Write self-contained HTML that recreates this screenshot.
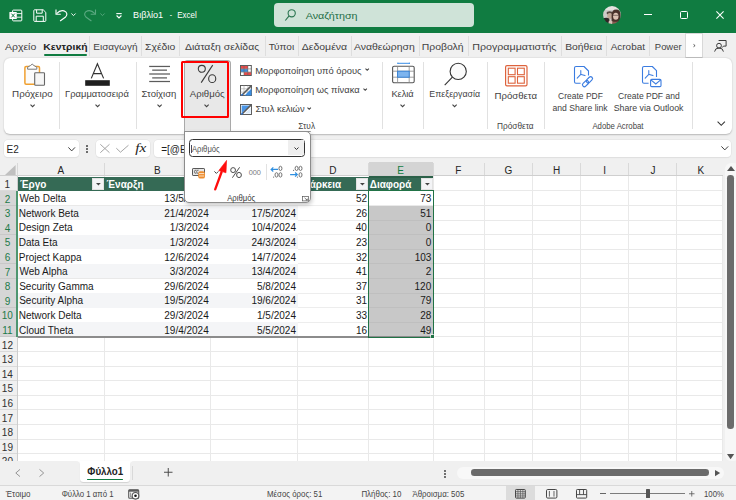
<!DOCTYPE html><html><head><meta charset="utf-8"><style>
html,body{margin:0;padding:0}
body{width:736px;height:500px;overflow:hidden;position:relative;background:#f0f0f0;font-family:"Liberation Sans",sans-serif}
.b{position:absolute;box-sizing:border-box}
svg.b{overflow:visible}
</style></head><body>
<div class="b" style="left:0px;top:0px;width:736.00px;height:32.60px;background:#107c41"></div>
<svg class="b" style="left:9px;top:8.5px" width="13.5" height="13" viewBox="0 0 13.5 13"><rect x="3.6" y="1.1" width="9.2" height="10.8" rx="0.8" fill="none" stroke="#fff" stroke-width="1"/><g stroke="#fff" stroke-width="0.9"><line x1="7.8" y1="4.6" x2="12.8" y2="4.6"/><line x1="7.8" y1="8.2" x2="12.8" y2="8.2"/></g><rect x="0.4" y="3" width="7.4" height="7" rx="0.6" fill="#fff"/><path d="M2.4 4.6l3.4 3.8M5.8 4.6l-3.4 3.8" stroke="#107c41" stroke-width="1"/></svg>
<svg class="b" style="left:33px;top:8.8px" width="13.5" height="12.5" viewBox="0 0 13.5 12.5"><path d="M1.6 0.8h8.6l2.6 2.6v8.2a0.8 0.8 0 0 1-0.8 0.8h-10.4a0.8 0.8 0 0 1-0.8-0.8v-10a0.8 0.8 0 0 1 0.8-0.8z" fill="none" stroke="#fff" stroke-width="1"/><path d="M3.6 0.8v3.4h5.6v-3.4" fill="none" stroke="#fff" stroke-width="1"/><path d="M3.2 12.2v-5h7.1v5" fill="none" stroke="#fff" stroke-width="1"/></svg>
<svg class="b" style="left:54px;top:6px" width="15.5" height="17" viewBox="0 0 15.5 17"><path d="M2 3.4V8.2H6.8" fill="none" stroke="#fff" stroke-width="1.1"/><path d="M2.6 7.6Q7.4 2.6 11.8 5.9Q14 8.3 11.6 11L6.1 15" fill="none" stroke="#fff" stroke-width="1.1"/></svg>
<svg class="b" style="left:71px;top:13.4px" width="5" height="3" viewBox="0 0 5 3"><path d="M0.4 0.5l2.1 2.1 2.1-2.1" fill="none" stroke="#fff" stroke-width="0.95"/></svg>
<svg class="b" style="left:82px;top:6px" width="15.5" height="17" viewBox="0 0 15.5 17"><g transform="translate(15.5,0) scale(-1,1)"><path d="M2 3.4V8.2H6.8" fill="none" stroke="#5aa880" stroke-width="1.1"/><path d="M2.6 7.6Q7.4 2.6 11.8 5.9Q14 8.3 11.6 11L6.1 15" fill="none" stroke="#5aa880" stroke-width="1.1"/></g></svg>
<svg class="b" style="left:99.9px;top:13.3px" width="5" height="3" viewBox="0 0 5 3"><path d="M0.4 0.5l2.1 2.1 2.1-2.1" fill="none" stroke="#5aa880" stroke-width="0.9"/></svg>
<svg class="b" style="left:115.9px;top:12.5px" width="6" height="5.5" viewBox="0 0 6 5.5"><line x1="0.3" y1="0.6" x2="5.7" y2="0.6" stroke="#fff" stroke-width="1.1"/><path d="M0.6 2.5l2.4 2.4 2.4-2.4" fill="none" stroke="#fff" stroke-width="1.1"/></svg>
<svg class="b" style="left:0;top:0" width="1" height="1"><text transform="translate(133.09,18.40) scale(1.0315,1)" font-family="'Liberation Sans'" font-size="8.841" font-weight="normal" font-style="normal" fill="#fff" >Βιβλίο1</text></svg>
<svg class="b" style="left:0;top:0" width="1" height="1"><text transform="translate(169.69,18.40) scale(0.7665,1)" font-family="'Liberation Sans'" font-size="8.841" font-weight="normal" font-style="normal" fill="#fff" >-</text></svg>
<svg class="b" style="left:0;top:0" width="1" height="1"><text transform="translate(177.18,18.40) scale(0.9044,1)" font-family="'Liberation Sans'" font-size="8.841" font-weight="normal" font-style="normal" fill="#fff" >Excel</text></svg>
<div class="b" style="left:274.3px;top:3px;width:199.50px;height:23.90px;background:#cfe3d8;border-radius:4px"></div>
<svg class="b" style="left:284.5px;top:8.8px" width="11" height="12" viewBox="0 0 11 12"><circle cx="6.7" cy="4.3" r="3.6" fill="none" stroke="#2a7550" stroke-width="1.1"/><line x1="4.1" y1="6.9" x2="0.3" y2="11.5" stroke="#2a7550" stroke-width="1.15"/></svg>
<svg class="b" style="left:0;top:0" width="1" height="1"><text transform="translate(305.70,18.90) scale(1.0903,1)" font-family="'Liberation Sans'" font-size="9.855" font-weight="normal" font-style="normal" fill="#226d45" >Αναζήτηση</text></svg>
<svg class="b" style="left:602.5px;top:5.8px" width="18" height="18" viewBox="0 0 18 18"><defs><clipPath id="av"><circle cx="9" cy="9" r="8.95"/></clipPath><filter id="bl"><feGaussianBlur stdDeviation="0.45"/></filter></defs><g clip-path="url(#av)"><g filter="url(#bl)"><rect x="-2" y="-2" width="22" height="22" fill="#cfcbc8"/><rect x="-2" y="-2" width="22" height="6" fill="#e4e2e0"/><ellipse cx="6.6" cy="7" rx="3" ry="1.8" fill="#55473f"/><ellipse cx="6.8" cy="10" rx="2.6" ry="3" fill="#c2a897"/><path d="M-1 13q4-2 7-0.6l2 6h-9z" fill="#2e2828"/><path d="M8.6 9q0-5.6 4.6-5.6t4.4 5.6v10h-9z" fill="#4a332b"/><ellipse cx="12.8" cy="10.2" rx="2.7" ry="3.5" fill="#ddc3b3"/><path d="M10 9.3h5.6" stroke="#4a3c38" stroke-width="0.6"/><path d="M9.6 15.4q3 0.6 5.6 0l1 3h-7z" fill="#8a5a50"/><path d="M6 14.5q2 0 3.6 1l-0.6 3.5h-4z" fill="#d8c4ba"/></g></g></svg>
<div class="b" style="left:643.6px;top:14.2px;width:8.00px;height:1.00px;background:#fff"></div>
<div class="b" style="left:679.7px;top:11.3px;width:8.00px;height:7.70px;border:1.05px solid #fff;border-radius:1.5px"></div>
<svg class="b" style="left:716px;top:11.3px" width="8" height="8" viewBox="0 0 8 8"><path d="M0.4 0.4L7.6 7.6M7.6 0.4L0.4 7.6" stroke="#fff" stroke-width="1.05"/></svg>
<svg class="b" style="left:0;top:0" width="1" height="1"><text transform="translate(5.05,50.00) scale(1.1209,1)" font-family="'Liberation Sans'" font-size="9.348" font-weight="normal" font-style="normal" fill="#424242" >Αρχείο</text></svg>
<svg class="b" style="left:0;top:0" width="1" height="1"><text transform="translate(93.22,50.00) scale(1.0730,1)" font-family="'Liberation Sans'" font-size="9.348" font-weight="normal" font-style="normal" fill="#424242" >Εισαγωγή</text></svg>
<svg class="b" style="left:0;top:0" width="1" height="1"><text transform="translate(145.01,50.00) scale(1.1126,1)" font-family="'Liberation Sans'" font-size="9.348" font-weight="normal" font-style="normal" fill="#424242" >Σχέδιο</text></svg>
<svg class="b" style="left:0;top:0" width="1" height="1"><text transform="translate(185.09,50.00) scale(1.1165,1)" font-family="'Liberation Sans'" font-size="9.348" font-weight="normal" font-style="normal" fill="#424242" >Διάταξη σελίδας</text></svg>
<svg class="b" style="left:0;top:0" width="1" height="1"><text transform="translate(268.84,50.00) scale(1.0740,1)" font-family="'Liberation Sans'" font-size="9.348" font-weight="normal" font-style="normal" fill="#424242" >Τύποι</text></svg>
<svg class="b" style="left:0;top:0" width="1" height="1"><text transform="translate(301.84,50.00) scale(1.1207,1)" font-family="'Liberation Sans'" font-size="9.348" font-weight="normal" font-style="normal" fill="#424242" >Δεδομένα</text></svg>
<svg class="b" style="left:0;top:0" width="1" height="1"><text transform="translate(354.00,50.00) scale(1.1205,1)" font-family="'Liberation Sans'" font-size="9.348" font-weight="normal" font-style="normal" fill="#424242" >Αναθεώρηση</text></svg>
<svg class="b" style="left:0;top:0" width="1" height="1"><text transform="translate(421.68,50.00) scale(1.1163,1)" font-family="'Liberation Sans'" font-size="9.348" font-weight="normal" font-style="normal" fill="#424242" >Προβολή</text></svg>
<svg class="b" style="left:0;top:0" width="1" height="1"><text transform="translate(472.16,50.00) scale(1.1446,1)" font-family="'Liberation Sans'" font-size="9.348" font-weight="normal" font-style="normal" fill="#424242" >Προγραμματιστής</text></svg>
<svg class="b" style="left:0;top:0" width="1" height="1"><text transform="translate(565.19,50.00) scale(1.1042,1)" font-family="'Liberation Sans'" font-size="9.348" font-weight="normal" font-style="normal" fill="#424242" >Βοήθεια</text></svg>
<svg class="b" style="left:0;top:0" width="1" height="1"><text transform="translate(610.75,50.00) scale(1.0621,1)" font-family="'Liberation Sans'" font-size="9.348" font-weight="normal" font-style="normal" fill="#424242" >Acrobat</text></svg>
<svg class="b" style="left:0;top:0" width="1" height="1"><text transform="translate(654.86,50.00) scale(1.0070,1)" font-family="'Liberation Sans'" font-size="9.348" font-weight="normal" font-style="normal" fill="#424242" >Power</text></svg>
<svg class="b" style="left:0;top:0" width="1" height="1"><text transform="translate(43.35,50.00) scale(1.1075,1)" font-family="'Liberation Sans'" font-size="9.348" font-weight="bold" font-style="normal" fill="#222" >Κεντρική</text></svg>
<div class="b" style="left:44px;top:54.2px;width:43.00px;height:1.80px;background:#107c41;border-radius:1px"></div>
<div class="b" style="left:89.2px;top:36px;width:1.00px;height:20.00px;background:#dedede"></div>
<div class="b" style="left:140.75px;top:36px;width:1.00px;height:20.00px;background:#dedede"></div>
<div class="b" style="left:179.0px;top:36px;width:1.00px;height:20.00px;background:#dedede"></div>
<div class="b" style="left:264.75px;top:36px;width:1.00px;height:20.00px;background:#dedede"></div>
<div class="b" style="left:298.0px;top:36px;width:1.00px;height:20.00px;background:#dedede"></div>
<div class="b" style="left:350.5px;top:36px;width:1.00px;height:20.00px;background:#dedede"></div>
<div class="b" style="left:418.75px;top:36px;width:1.00px;height:20.00px;background:#dedede"></div>
<div class="b" style="left:467.5px;top:36px;width:1.00px;height:20.00px;background:#dedede"></div>
<div class="b" style="left:560.9px;top:36px;width:1.00px;height:20.00px;background:#dedede"></div>
<div class="b" style="left:606.0px;top:36px;width:1.00px;height:20.00px;background:#dedede"></div>
<div class="b" style="left:649.3px;top:36px;width:1.00px;height:20.00px;background:#dedede"></div>
<div class="b" style="left:684.6px;top:42px;width:1.00px;height:10.00px;background:#b8b8b8;opacity:0.5"></div>
<div class="b" style="left:685.3px;top:33.1px;width:17.90px;height:25.20px;background:#fff;border:1px solid #d8d8d8;border-bottom-color:#c4c4c4;border-radius:1px"></div>
<svg class="b" style="left:693.1px;top:43.8px" width="3" height="3.2" viewBox="0 0 3 3.2"><path d="M0.5 0.4l1.6 1.2-1.6 1.2" fill="none" stroke="#333" stroke-width="0.8"/></svg>
<svg class="b" style="left:714.3px;top:39.8px" width="12.6" height="12" viewBox="0 0 12.6 12"><path d="M4.6 0.5h7.5v5.6h-2.6l-1.4 1.5" fill="none" stroke="#333" stroke-width="0.95"/><circle cx="5" cy="5.7" r="2.4" fill="#f0f0f0" stroke="#333" stroke-width="0.95"/><path d="M0.6 11.6q0.4-3.6 4.4-3.6t4.4 3.6" fill="none" stroke="#333" stroke-width="0.95"/></svg>
<div class="b" style="left:3.7px;top:58.3px;width:728.10px;height:75.60px;background:#fff;border-radius:6px;box-shadow:0 0.8px 1.6px rgba(0,0,0,0.24)"></div>
<svg class="b" style="left:18px;top:60px" width="32" height="30" viewBox="0 0 32 30"><rect x="6.9" y="6.6" width="14.6" height="17.6" rx="1.2" fill="#fbfbfb" stroke="#f0a030" stroke-width="1.5"/><path d="M9.6 9.2V7.2L12.4 5.6Q14.2 2.6 16 5.6L18.8 7.2V9.2Z" fill="#fff" stroke="#7a7a7a" stroke-width="1" stroke-linejoin="round"/><rect x="16.7" y="12.8" width="9.8" height="12.5" rx="0.8" fill="#f6f6f6" stroke="#666" stroke-width="1.1"/></svg>
<svg class="b" style="left:0;top:0" width="1" height="1"><text transform="translate(12.08,97.10) scale(1.0248,1)" font-family="'Liberation Sans'" font-size="9.565" font-weight="normal" font-style="normal" fill="#424242" >Πρόχειρο</text></svg>
<svg class="b" style="left:29.799999999999997px;top:103.60000000000001px" width="5.2" height="3.2" viewBox="0 0 5.2 3.2"><path d="M0.5 0.6l2.10 2.10 2.10 -2.10" fill="none" stroke="#444" stroke-width="1.1"/></svg>
<div class="b" style="left:58.7px;top:62px;width:1.00px;height:66.80px;background:#e1e1e1"></div>
<svg class="b" style="left:85px;top:63.2px" width="25" height="23" viewBox="0 0 25 23"><path d="M6.3 15.4L12.4 0.8 18.6 15.4M8.4 10.6h8.1" fill="none" stroke="#333" stroke-width="1.15"/><rect x="0.2" y="17.2" width="24.6" height="5.6" fill="#1f1f1f"/></svg>
<svg class="b" style="left:0;top:0" width="1" height="1"><text transform="translate(65.07,97.10) scale(0.9825,1)" font-family="'Liberation Sans'" font-size="9.565" font-weight="normal" font-style="normal" fill="#424242" >Γραμματοσειρά</text></svg>
<svg class="b" style="left:94.5px;top:103.60000000000001px" width="5.2" height="3.2" viewBox="0 0 5.2 3.2"><path d="M0.5 0.6l2.10 2.10 2.10 -2.10" fill="none" stroke="#444" stroke-width="1.1"/></svg>
<div class="b" style="left:136.0px;top:62px;width:1.00px;height:66.80px;background:#e1e1e1"></div>
<svg class="b" style="left:149px;top:65.5px" width="21.5" height="16.5" viewBox="0 0 21.5 16.5"><g stroke="#5c5c5c" stroke-width="1.25"><line x1="0.2" y1="0.45" x2="21" y2="0.45"/><line x1="3.2" y1="4.15" x2="18" y2="4.15"/><line x1="0.2" y1="8" x2="21" y2="8"/><line x1="3.2" y1="11.9" x2="18" y2="11.9"/><line x1="0.2" y1="15.5" x2="21" y2="15.5"/></g></svg>
<svg class="b" style="left:0;top:0" width="1" height="1"><text transform="translate(141.55,97.10)" font-family="'Liberation Sans'" font-size="9.565" font-weight="normal" font-style="normal" fill="#424242" >Στοίχιση</text></svg>
<svg class="b" style="left:156.9px;top:103.60000000000001px" width="5.2" height="3.2" viewBox="0 0 5.2 3.2"><path d="M0.5 0.6l2.10 2.10 2.10 -2.10" fill="none" stroke="#444" stroke-width="1.1"/></svg>
<div class="b" style="left:183.6px;top:59.5px;width:47.40px;height:72.30px;background:#e8e8e8;border:1px solid #a9a9a9;border-bottom:none;border-radius:3.5px 3.5px 0 0"></div>
<svg class="b" style="left:194px;top:62px" width="26" height="24" viewBox="0 0 26 24"><ellipse cx="7.8" cy="6.85" rx="3.5" ry="3.45" fill="none" stroke="#3a3a3a" stroke-width="1.1"/><ellipse cx="18.2" cy="16.65" rx="3.55" ry="3.9" fill="none" stroke="#3a3a3a" stroke-width="1.1"/><line x1="18.7" y1="3.1" x2="7.2" y2="20.6" stroke="#3a3a3a" stroke-width="1.1"/></svg>
<svg class="b" style="left:0;top:0" width="1" height="1"><text transform="translate(189.80,97.10) scale(1.0049,1)" font-family="'Liberation Sans'" font-size="9.565" font-weight="normal" font-style="normal" fill="#424242" >Αριθμός</text></svg>
<svg class="b" style="left:203.8px;top:103.60000000000001px" width="5.2" height="3.2" viewBox="0 0 5.2 3.2"><path d="M0.5 0.6l2.10 2.10 2.10 -2.10" fill="none" stroke="#444" stroke-width="1.1"/></svg>
<div class="b" style="left:181px;top:61px;width:48.10px;height:57.40px;border:2.8px solid #ff0000;border-radius:1.5px"></div>
<svg class="b" style="left:240.2px;top:65.1px" width="11.8" height="11" viewBox="0 0 11.8 11"><rect x="0.5" y="0.5" width="10.8" height="10" fill="#fff" stroke="#555" stroke-width="0.95"/><rect x="1" y="1" width="7" height="2.8" fill="#e84a4a"/><rect x="1" y="4.1" width="7" height="2.8" fill="#3b8de0"/><rect x="4" y="7.2" width="7" height="2.8" fill="#e84a4a"/><g stroke="#666" stroke-width="0.6"><line x1="4" y1="0.5" x2="4" y2="10.5"/><line x1="7.8" y1="0.5" x2="7.8" y2="10.5"/><line x1="0.5" y1="3.9" x2="11.3" y2="3.9"/><line x1="0.5" y1="7.1" x2="11.3" y2="7.1"/></g></svg>
<svg class="b" style="left:0;top:0" width="1" height="1"><text transform="translate(255.27,73.80) scale(1.0080,1)" font-family="'Liberation Sans'" font-size="9.275" font-weight="normal" font-style="normal" fill="#424242" >Μορφοποίηση υπό όρους</text></svg>
<svg class="b" style="left:364.6px;top:68.4px" width="4.4" height="3.2" viewBox="0 0 4.4 3.2"><path d="M0.5 0.6l1.70 1.70 1.70 -1.70" fill="none" stroke="#444" stroke-width="1.1"/></svg>
<svg class="b" style="left:240.2px;top:84.5px" width="12" height="11" viewBox="0 0 12 11"><rect x="0.5" y="0.5" width="11" height="10" fill="#fff" stroke="#555" stroke-width="0.95"/><g stroke="#9a9a9a" stroke-width="0.55"><line x1="4" y1="0.5" x2="4" y2="10.5"/><line x1="7.9" y1="0.5" x2="7.9" y2="10.5"/><line x1="0.5" y1="3.8" x2="11.5" y2="3.8"/><line x1="0.5" y1="7.1" x2="11.5" y2="7.1"/></g><path d="M4.6 10.5L11.5 3.6V10.5Z" fill="#3b8de0"/><path d="M10.9 1.1L2.3 9.7" stroke="#5a5a5a" stroke-width="1.5"/><path d="M2.9 9.1L1.3 10.4" stroke="#2b6cc4" stroke-width="1.4"/></svg>
<svg class="b" style="left:0;top:0" width="1" height="1"><text transform="translate(255.27,93.30) scale(1.0051,1)" font-family="'Liberation Sans'" font-size="9.275" font-weight="normal" font-style="normal" fill="#424242" >Μορφοποίηση ως πίνακα</text></svg>
<svg class="b" style="left:362.7px;top:88.0px" width="4.4" height="3.2" viewBox="0 0 4.4 3.2"><path d="M0.5 0.6l1.70 1.70 1.70 -1.70" fill="none" stroke="#444" stroke-width="1.1"/></svg>
<svg class="b" style="left:240.2px;top:103.6px" width="12" height="11" viewBox="0 0 12 11"><rect x="0.5" y="0.5" width="11" height="10" fill="#fff" stroke="#555" stroke-width="0.95"/><path d="M1.6 1.6H10.4L1.6 9.4Z" fill="#4a95e6"/><path d="M4.8 9.6L10.6 3.8V9.6Z" fill="#dceafa"/><path d="M10.9 1.1L2.3 9.7" stroke="#5a5a5a" stroke-width="1.5"/><path d="M2.9 9.1L1.3 10.4" stroke="#2b6cc4" stroke-width="1.4"/></svg>
<svg class="b" style="left:0;top:0" width="1" height="1"><text transform="translate(255.56,112.30) scale(1.0111,1)" font-family="'Liberation Sans'" font-size="9.275" font-weight="normal" font-style="normal" fill="#424242" >Στυλ κελιών</text></svg>
<svg class="b" style="left:306.5px;top:106.60000000000001px" width="4.4" height="3.2" viewBox="0 0 4.4 3.2"><path d="M0.5 0.6l1.70 1.70 1.70 -1.70" fill="none" stroke="#444" stroke-width="1.1"/></svg>
<svg class="b" style="left:0;top:0" width="1" height="1"><text transform="translate(298.31,129.40) scale(0.9927,1)" font-family="'Liberation Sans'" font-size="8.406" font-weight="normal" font-style="normal" fill="#444444" >Στυλ</text></svg>
<div class="b" style="left:381.7px;top:62px;width:1.00px;height:66.80px;background:#e1e1e1"></div>
<svg class="b" style="left:391.5px;top:62.5px" width="23" height="20.5" viewBox="0 0 23 20.5"><path d="M5.8 0.3h11.6M5.8 -0.4v1.4M17.4 -0.4v1.4" stroke="#3a8ee6" stroke-width="1"/><rect x="0.6" y="3.2" width="21.6" height="16.6" rx="1.6" fill="#fff" stroke="#555" stroke-width="1.1"/><g stroke="#888" stroke-width="0.8"><line x1="5.6" y1="3.2" x2="5.6" y2="19.8"/><line x1="17.2" y1="3.2" x2="17.2" y2="19.8"/><line x1="0.6" y1="8.2" x2="22.2" y2="8.2"/><line x1="0.6" y1="14.2" x2="22.2" y2="14.2"/></g><rect x="5.6" y="8.2" width="11.6" height="6" fill="#7db4ee" stroke="#2f7fd6" stroke-width="0.9"/></svg>
<svg class="b" style="left:0;top:0" width="1" height="1"><text transform="translate(391.38,97.10) scale(0.9691,1)" font-family="'Liberation Sans'" font-size="9.565" font-weight="normal" font-style="normal" fill="#424242" >Κελιά</text></svg>
<svg class="b" style="left:399.79999999999995px;top:103.60000000000001px" width="5.2" height="3.2" viewBox="0 0 5.2 3.2"><path d="M0.5 0.6l2.10 2.10 2.10 -2.10" fill="none" stroke="#444" stroke-width="1.1"/></svg>
<div class="b" style="left:422.7px;top:62px;width:1.00px;height:66.80px;background:#e1e1e1"></div>
<svg class="b" style="left:443.5px;top:62.5px" width="23.5" height="23" viewBox="0 0 23.5 23"><circle cx="14.2" cy="8.4" r="8.1" fill="#fbfbfb" stroke="#333" stroke-width="1.1"/><line x1="8.4" y1="14.2" x2="0.7" y2="22.2" stroke="#333" stroke-width="1.1"/></svg>
<svg class="b" style="left:0;top:0" width="1" height="1"><text transform="translate(429.31,97.10) scale(0.9224,1)" font-family="'Liberation Sans'" font-size="9.565" font-weight="normal" font-style="normal" fill="#424242" >Επεξεργασία</text></svg>
<svg class="b" style="left:452.2px;top:103.60000000000001px" width="5.2" height="3.2" viewBox="0 0 5.2 3.2"><path d="M0.5 0.6l2.10 2.10 2.10 -2.10" fill="none" stroke="#444" stroke-width="1.1"/></svg>
<div class="b" style="left:486.7px;top:62px;width:1.00px;height:66.80px;background:#e1e1e1"></div>
<svg class="b" style="left:504.6px;top:64.6px" width="22.6" height="21.4" viewBox="0 0 22.6 21.4"><rect x="0.6" y="0.6" width="21.4" height="20.2" rx="1.4" fill="none" stroke="#de633c" stroke-width="1.2"/><g fill="none" stroke="#de633c" stroke-width="1.1"><rect x="3.3" y="3.2" width="6.8" height="6.5"/><rect x="12.5" y="3.2" width="6.8" height="6.5"/><rect x="3.3" y="11.7" width="6.8" height="6.5"/><rect x="12.5" y="11.7" width="6.8" height="6.5"/></g></svg>
<svg class="b" style="left:0;top:0" width="1" height="1"><text transform="translate(494.45,99.00) scale(1.0244,1)" font-family="'Liberation Sans'" font-size="9.420" font-weight="normal" font-style="normal" fill="#424242" >Πρόσθετα</text></svg>
<svg class="b" style="left:0;top:0" width="1" height="1"><text transform="translate(497.05,129.40) scale(0.9860,1)" font-family="'Liberation Sans'" font-size="8.406" font-weight="normal" font-style="normal" fill="#444444" >Πρόσθετα</text></svg>
<div class="b" style="left:543.7px;top:62px;width:1.00px;height:66.80px;background:#e1e1e1"></div>
<svg class="b" style="left:570px;top:62px" width="28" height="28" viewBox="0 0 28 28"><path d="M10.6 21.3H6a1.5 1.5 0 0 1-1.5-1.5V6a1.5 1.5 0 0 1 1.5-1.5H14L18.5 9V13.4" fill="none" stroke="#3b7ce0" stroke-width="1.1" stroke-linejoin="round"/><path d="M10.8 8.4V12.4L7.2 16.2M11.2 12.6L15 13.6" fill="none" stroke="#3b7ce0" stroke-width="1.05" stroke-linecap="round" stroke-linejoin="round"/><g transform="rotate(-45 17.5 19.7)" fill="none" stroke="#3b7ce0" stroke-width="1.15"><rect x="11.2" y="17.8" width="7.2" height="3.8" rx="1.9"/><rect x="16.6" y="17.8" width="7.2" height="3.8" rx="1.9"/></g></svg>
<svg class="b" style="left:0;top:0" width="1" height="1"><text transform="translate(558.10,99.05) scale(0.9003,1)" font-family="'Liberation Sans'" font-size="9.420" font-weight="normal" font-style="normal" fill="#424242" >Create PDF</text></svg>
<svg class="b" style="left:0;top:0" width="1" height="1"><text transform="translate(552.53,110.50) scale(0.9155,1)" font-family="'Liberation Sans'" font-size="9.420" font-weight="normal" font-style="normal" fill="#424242" >and Share link</text></svg>
<svg class="b" style="left:638px;top:62px" width="28" height="28" viewBox="0 0 28 28"><path d="M10.6 21.3H6a1.5 1.5 0 0 1-1.5-1.5V6a1.5 1.5 0 0 1 1.5-1.5H14.3L18.5 8.6V15" fill="none" stroke="#3b7ce0" stroke-width="1.1" stroke-linejoin="round"/><path d="M10.8 8.4V12.4L7.2 16.2M11.2 12.6L15 13.6" fill="none" stroke="#3b7ce0" stroke-width="1.05" stroke-linecap="round" stroke-linejoin="round"/><rect x="12.6" y="17.4" width="10.4" height="7.2" rx="1.1" fill="#fff" stroke="#3b7ce0" stroke-width="1.1"/><path d="M12.9 17.8l4.9 4.2 4.9-4.2" fill="none" stroke="#3b7ce0" stroke-width="1.05"/></svg>
<svg class="b" style="left:0;top:0" width="1" height="1"><text transform="translate(618.00,99.05) scale(0.9076,1)" font-family="'Liberation Sans'" font-size="9.420" font-weight="normal" font-style="normal" fill="#424242" >Create PDF and</text></svg>
<svg class="b" style="left:0;top:0" width="1" height="1"><text transform="translate(613.73,110.50) scale(0.9327,1)" font-family="'Liberation Sans'" font-size="9.420" font-weight="normal" font-style="normal" fill="#424242" >Share via Outlook</text></svg>
<svg class="b" style="left:0;top:0" width="1" height="1"><text transform="translate(592.40,129.40) scale(0.9274,1)" font-family="'Liberation Sans'" font-size="8.406" font-weight="normal" font-style="normal" fill="#444444" >Adobe Acrobat</text></svg>
<div class="b" style="left:691.7px;top:62px;width:1.00px;height:66.80px;background:#e1e1e1"></div>
<svg class="b" style="left:716.8px;top:121px" width="8.5" height="5" viewBox="0 0 8.5 5"><path d="M0.6 0.6l3.65 3.65 3.65-3.65" fill="none" stroke="#333" stroke-width="1.05"/></svg>
<div class="b" style="left:3.8px;top:139.8px;width:75.30px;height:17.10px;background:#fff;border-radius:4px;box-shadow:0 0 0 0.6px #e2e2e2, 0 0.6px 1px rgba(0,0,0,0.08)"></div>
<svg class="b" style="left:0;top:0" width="1" height="1"><text transform="translate(6.62,152.50)" font-family="'Liberation Sans'" font-size="10.000" font-weight="normal" font-style="normal" fill="#1f1f1f" >E2</text></svg>
<svg class="b" style="left:67.9px;top:146.9px" width="7.4" height="4.5" viewBox="0 0 7.4 4.5"><path d="M0.4 0.4l3.3 3.5 3.3-3.5" fill="none" stroke="#333" stroke-width="0.95"/></svg>
<svg class="b" style="left:86.3px;top:144.6px" width="2" height="8" viewBox="0 0 2 8"><circle cx="1" cy="1" r="0.95" fill="#333"/><circle cx="1" cy="4" r="0.95" fill="#333"/><circle cx="1" cy="7" r="0.95" fill="#333"/></svg>
<div class="b" style="left:95.5px;top:139.8px;width:54.30px;height:17.10px;background:#fff;border-radius:4px;box-shadow:0 0 0 0.6px #e2e2e2, 0 0.6px 1px rgba(0,0,0,0.08)"></div>
<svg class="b" style="left:99.6px;top:144.2px" width="9.8" height="9" viewBox="0 0 9.8 9"><path d="M0.3 0.3l9.2 8.4M9.5 0.3l-9.2 8.4" stroke="#a0a0a0" stroke-width="0.95"/></svg>
<svg class="b" style="left:116.2px;top:145px" width="12.7" height="7.5" viewBox="0 0 12.7 7.5"><path d="M0.3 3.2l4.2 4 8-7" fill="none" stroke="#a0a0a0" stroke-width="0.95"/></svg>
<svg class="b" style="left:0;top:0" width="1" height="1"><text transform="translate(135.30,152.40) scale(1.2490,1)" font-family="'Liberation Serif'" font-size="12.200" font-weight="normal" font-style="italic" fill="#222" >fx</text></svg>
<div class="b" style="left:153.7px;top:139.8px;width:577.50px;height:17.10px;background:#fff;border-radius:4px;box-shadow:0 0 0 0.6px #e2e2e2, 0 0.6px 1px rgba(0,0,0,0.08)"></div>
<svg class="b" style="left:0;top:0" width="1" height="1"><text transform="translate(161.13,152.50)" font-family="'Liberation Sans'" font-size="10.000" font-weight="normal" font-style="normal" fill="#1f1f1f" >=[@E</text></svg>
<svg class="b" style="left:721px;top:145.6px" width="7.6" height="4.4" viewBox="0 0 7.6 4.4"><path d="M0.4 0.4l3.4 3.5 3.4-3.5" fill="none" stroke="#333" stroke-width="0.95"/></svg>
<div class="b" style="left:0px;top:162.2px;width:736.00px;height:298.80px;background:#fff"></div>
<div class="b" style="left:103.9px;top:176.3px;width:1.00px;height:284.70px;background:#e9e9e9"></div>
<div class="b" style="left:210.0px;top:176.3px;width:1.00px;height:284.70px;background:#e9e9e9"></div>
<div class="b" style="left:297.2px;top:176.3px;width:1.00px;height:284.70px;background:#e9e9e9"></div>
<div class="b" style="left:368.1px;top:176.3px;width:1.00px;height:284.70px;background:#e9e9e9"></div>
<div class="b" style="left:432.5px;top:176.3px;width:1.00px;height:284.70px;background:#e9e9e9"></div>
<div class="b" style="left:483.5px;top:176.3px;width:1.00px;height:284.70px;background:#e9e9e9"></div>
<div class="b" style="left:532.0px;top:176.3px;width:1.00px;height:284.70px;background:#e9e9e9"></div>
<div class="b" style="left:580.0px;top:176.3px;width:1.00px;height:284.70px;background:#e9e9e9"></div>
<div class="b" style="left:628.1px;top:176.3px;width:1.00px;height:284.70px;background:#e9e9e9"></div>
<div class="b" style="left:676.2px;top:176.3px;width:1.00px;height:284.70px;background:#e9e9e9"></div>
<div class="b" style="left:722.0px;top:176.3px;width:1.00px;height:284.70px;background:#e9e9e9"></div>
<div class="b" style="left:17.3px;top:190.4px;width:705.20px;height:1.00px;background:#e9e9e9"></div>
<div class="b" style="left:17.3px;top:205.0px;width:705.20px;height:1.00px;background:#e9e9e9"></div>
<div class="b" style="left:17.3px;top:219.6px;width:705.20px;height:1.00px;background:#e9e9e9"></div>
<div class="b" style="left:17.3px;top:234.20000000000002px;width:705.20px;height:1.00px;background:#e9e9e9"></div>
<div class="b" style="left:17.3px;top:248.8px;width:705.20px;height:1.00px;background:#e9e9e9"></div>
<div class="b" style="left:17.3px;top:263.40000000000003px;width:705.20px;height:1.00px;background:#e9e9e9"></div>
<div class="b" style="left:17.3px;top:278.0px;width:705.20px;height:1.00px;background:#e9e9e9"></div>
<div class="b" style="left:17.3px;top:292.6px;width:705.20px;height:1.00px;background:#e9e9e9"></div>
<div class="b" style="left:17.3px;top:307.20000000000005px;width:705.20px;height:1.00px;background:#e9e9e9"></div>
<div class="b" style="left:17.3px;top:321.80000000000007px;width:705.20px;height:1.00px;background:#e9e9e9"></div>
<div class="b" style="left:17.3px;top:336.40000000000003px;width:705.20px;height:1.00px;background:#e9e9e9"></div>
<div class="b" style="left:17.3px;top:351.0px;width:705.20px;height:1.00px;background:#e9e9e9"></div>
<div class="b" style="left:17.3px;top:365.6px;width:705.20px;height:1.00px;background:#e9e9e9"></div>
<div class="b" style="left:17.3px;top:380.20000000000005px;width:705.20px;height:1.00px;background:#e9e9e9"></div>
<div class="b" style="left:17.3px;top:394.80000000000007px;width:705.20px;height:1.00px;background:#e9e9e9"></div>
<div class="b" style="left:17.3px;top:409.40000000000003px;width:705.20px;height:1.00px;background:#e9e9e9"></div>
<div class="b" style="left:17.3px;top:424.0px;width:705.20px;height:1.00px;background:#e9e9e9"></div>
<div class="b" style="left:17.3px;top:438.6px;width:705.20px;height:1.00px;background:#e9e9e9"></div>
<div class="b" style="left:17.3px;top:453.20000000000005px;width:705.20px;height:1.00px;background:#e9e9e9"></div>
<div class="b" style="left:17.3px;top:467.8px;width:705.20px;height:1.00px;background:#e9e9e9"></div>
<div class="b" style="left:0px;top:162.2px;width:722.50px;height:14.10px;background:#f0f0f0"></div>
<div class="b" style="left:368.6px;top:162.2px;width:64.40px;height:14.10px;background:#d4d4d4"></div>
<div class="b" style="left:103.9px;top:162.7px;width:1.00px;height:13.60px;background:#d9d9d9"></div>
<svg class="b" style="left:0;top:0" width="1" height="1"><text transform="translate(57.49,173.90)" font-family="'Liberation Sans'" font-size="10.000" font-weight="normal" font-style="normal" fill="#262626" >A</text></svg>
<div class="b" style="left:210.0px;top:162.7px;width:1.00px;height:13.60px;background:#d9d9d9"></div>
<svg class="b" style="left:0;top:0" width="1" height="1"><text transform="translate(153.93,173.90)" font-family="'Liberation Sans'" font-size="10.000" font-weight="normal" font-style="normal" fill="#262626" >B</text></svg>
<div class="b" style="left:297.2px;top:162.7px;width:1.00px;height:13.60px;background:#d9d9d9"></div>
<svg class="b" style="left:0;top:0" width="1" height="1"><text transform="translate(250.43,173.90)" font-family="'Liberation Sans'" font-size="10.000" font-weight="normal" font-style="normal" fill="#262626" >C</text></svg>
<div class="b" style="left:368.1px;top:162.7px;width:1.00px;height:13.60px;background:#d9d9d9"></div>
<svg class="b" style="left:0;top:0" width="1" height="1"><text transform="translate(329.32,173.90)" font-family="'Liberation Sans'" font-size="10.000" font-weight="normal" font-style="normal" fill="#262626" >D</text></svg>
<div class="b" style="left:432.5px;top:162.7px;width:1.00px;height:13.60px;background:#d9d9d9"></div>
<svg class="b" style="left:0;top:0" width="1" height="1"><text transform="translate(397.28,173.90)" font-family="'Liberation Sans'" font-size="10.000" font-weight="normal" font-style="normal" fill="#107c41" >E</text></svg>
<div class="b" style="left:483.5px;top:162.7px;width:1.00px;height:13.60px;background:#d9d9d9"></div>
<svg class="b" style="left:0;top:0" width="1" height="1"><text transform="translate(455.22,173.90)" font-family="'Liberation Sans'" font-size="10.000" font-weight="normal" font-style="normal" fill="#262626" >F</text></svg>
<div class="b" style="left:532.0px;top:162.7px;width:1.00px;height:13.60px;background:#d9d9d9"></div>
<svg class="b" style="left:0;top:0" width="1" height="1"><text transform="translate(504.50,173.90)" font-family="'Liberation Sans'" font-size="10.000" font-weight="normal" font-style="normal" fill="#262626" >G</text></svg>
<div class="b" style="left:580.0px;top:162.7px;width:1.00px;height:13.60px;background:#d9d9d9"></div>
<svg class="b" style="left:0;top:0" width="1" height="1"><text transform="translate(552.91,173.90)" font-family="'Liberation Sans'" font-size="10.000" font-weight="normal" font-style="normal" fill="#262626" >H</text></svg>
<div class="b" style="left:628.1px;top:162.7px;width:1.00px;height:13.60px;background:#d9d9d9"></div>
<svg class="b" style="left:0;top:0" width="1" height="1"><text transform="translate(603.22,173.90)" font-family="'Liberation Sans'" font-size="10.000" font-weight="normal" font-style="normal" fill="#262626" >I</text></svg>
<div class="b" style="left:676.2px;top:162.7px;width:1.00px;height:13.60px;background:#d9d9d9"></div>
<svg class="b" style="left:0;top:0" width="1" height="1"><text transform="translate(650.38,173.90)" font-family="'Liberation Sans'" font-size="10.000" font-weight="normal" font-style="normal" fill="#262626" >J</text></svg>
<svg class="b" style="left:0;top:0" width="1" height="1"><text transform="translate(697.53,173.90)" font-family="'Liberation Sans'" font-size="10.000" font-weight="normal" font-style="normal" fill="#262626" >K</text></svg>
<div class="b" style="left:0px;top:175.4px;width:722.50px;height:1.00px;background:#cfcfcf"></div>
<svg class="b" style="left:5.4px;top:164.8px" width="10.6" height="10" viewBox="0 0 10.6 10"><path d="M10.6 0V10H0z" fill="#c0c0c0"/></svg>
<div class="b" style="left:16.8px;top:162.7px;width:1.00px;height:13.60px;background:#d9d9d9"></div>
<div class="b" style="left:0px;top:176.3px;width:17.30px;height:284.70px;background:#f0f0f0"></div>
<div class="b" style="left:0px;top:190.4px;width:17.30px;height:1.00px;background:#dadada"></div>
<svg class="b" style="left:0;top:0" width="1" height="1"><text transform="translate(4.62,188.00)" font-family="'Liberation Sans'" font-size="10.000" font-weight="normal" font-style="normal" fill="#303030" >1</text></svg>
<div class="b" style="left:0px;top:190.9px;width:17.30px;height:14.60px;background:#d6d6d6"></div>
<div class="b" style="left:0px;top:205.0px;width:17.30px;height:1.00px;background:#c8c8c8"></div>
<svg class="b" style="left:0;top:0" width="1" height="1"><text transform="translate(4.70,202.60)" font-family="'Liberation Sans'" font-size="10.000" font-weight="normal" font-style="normal" fill="#1d7a4a" >2</text></svg>
<div class="b" style="left:0px;top:205.5px;width:17.30px;height:14.60px;background:#d6d6d6"></div>
<div class="b" style="left:0px;top:219.6px;width:17.30px;height:1.00px;background:#c8c8c8"></div>
<svg class="b" style="left:0;top:0" width="1" height="1"><text transform="translate(4.78,217.20)" font-family="'Liberation Sans'" font-size="10.000" font-weight="normal" font-style="normal" fill="#1d7a4a" >3</text></svg>
<div class="b" style="left:0px;top:220.10000000000002px;width:17.30px;height:14.60px;background:#d6d6d6"></div>
<div class="b" style="left:0px;top:234.20000000000002px;width:17.30px;height:1.00px;background:#c8c8c8"></div>
<svg class="b" style="left:0;top:0" width="1" height="1"><text transform="translate(4.78,231.80)" font-family="'Liberation Sans'" font-size="10.000" font-weight="normal" font-style="normal" fill="#1d7a4a" >4</text></svg>
<div class="b" style="left:0px;top:234.70000000000002px;width:17.30px;height:14.60px;background:#d6d6d6"></div>
<div class="b" style="left:0px;top:248.8px;width:17.30px;height:1.00px;background:#c8c8c8"></div>
<svg class="b" style="left:0;top:0" width="1" height="1"><text transform="translate(4.78,246.40)" font-family="'Liberation Sans'" font-size="10.000" font-weight="normal" font-style="normal" fill="#1d7a4a" >5</text></svg>
<div class="b" style="left:0px;top:249.3px;width:17.30px;height:14.60px;background:#d6d6d6"></div>
<div class="b" style="left:0px;top:263.40000000000003px;width:17.30px;height:1.00px;background:#c8c8c8"></div>
<svg class="b" style="left:0;top:0" width="1" height="1"><text transform="translate(4.70,261.00)" font-family="'Liberation Sans'" font-size="10.000" font-weight="normal" font-style="normal" fill="#1d7a4a" >6</text></svg>
<div class="b" style="left:0px;top:263.9px;width:17.30px;height:14.60px;background:#d6d6d6"></div>
<div class="b" style="left:0px;top:278.0px;width:17.30px;height:1.00px;background:#c8c8c8"></div>
<svg class="b" style="left:0;top:0" width="1" height="1"><text transform="translate(4.70,275.60)" font-family="'Liberation Sans'" font-size="10.000" font-weight="normal" font-style="normal" fill="#1d7a4a" >7</text></svg>
<div class="b" style="left:0px;top:278.5px;width:17.30px;height:14.60px;background:#d6d6d6"></div>
<div class="b" style="left:0px;top:292.6px;width:17.30px;height:1.00px;background:#c8c8c8"></div>
<svg class="b" style="left:0;top:0" width="1" height="1"><text transform="translate(4.78,290.20)" font-family="'Liberation Sans'" font-size="10.000" font-weight="normal" font-style="normal" fill="#1d7a4a" >8</text></svg>
<div class="b" style="left:0px;top:293.1px;width:17.30px;height:14.60px;background:#d6d6d6"></div>
<div class="b" style="left:0px;top:307.20000000000005px;width:17.30px;height:1.00px;background:#c8c8c8"></div>
<svg class="b" style="left:0;top:0" width="1" height="1"><text transform="translate(4.70,304.80)" font-family="'Liberation Sans'" font-size="10.000" font-weight="normal" font-style="normal" fill="#1d7a4a" >9</text></svg>
<div class="b" style="left:0px;top:307.70000000000005px;width:17.30px;height:14.60px;background:#d6d6d6"></div>
<div class="b" style="left:0px;top:321.80000000000007px;width:17.30px;height:1.00px;background:#c8c8c8"></div>
<svg class="b" style="left:0;top:0" width="1" height="1"><text transform="translate(1.78,319.40)" font-family="'Liberation Sans'" font-size="10.000" font-weight="normal" font-style="normal" fill="#1d7a4a" >10</text></svg>
<div class="b" style="left:0px;top:322.3px;width:17.30px;height:14.60px;background:#d6d6d6"></div>
<div class="b" style="left:0px;top:336.40000000000003px;width:17.30px;height:1.00px;background:#c8c8c8"></div>
<svg class="b" style="left:0;top:0" width="1" height="1"><text transform="translate(2.22,334.00)" font-family="'Liberation Sans'" font-size="10.000" font-weight="normal" font-style="normal" fill="#1d7a4a" >11</text></svg>
<div class="b" style="left:0px;top:351.0px;width:17.30px;height:1.00px;background:#dadada"></div>
<svg class="b" style="left:0;top:0" width="1" height="1"><text transform="translate(1.85,348.60)" font-family="'Liberation Sans'" font-size="10.000" font-weight="normal" font-style="normal" fill="#303030" >12</text></svg>
<div class="b" style="left:0px;top:365.6px;width:17.30px;height:1.00px;background:#dadada"></div>
<svg class="b" style="left:0;top:0" width="1" height="1"><text transform="translate(1.85,363.20)" font-family="'Liberation Sans'" font-size="10.000" font-weight="normal" font-style="normal" fill="#303030" >13</text></svg>
<div class="b" style="left:0px;top:380.20000000000005px;width:17.30px;height:1.00px;background:#dadada"></div>
<svg class="b" style="left:0;top:0" width="1" height="1"><text transform="translate(1.78,377.80)" font-family="'Liberation Sans'" font-size="10.000" font-weight="normal" font-style="normal" fill="#303030" >14</text></svg>
<div class="b" style="left:0px;top:394.80000000000007px;width:17.30px;height:1.00px;background:#dadada"></div>
<svg class="b" style="left:0;top:0" width="1" height="1"><text transform="translate(1.85,392.40)" font-family="'Liberation Sans'" font-size="10.000" font-weight="normal" font-style="normal" fill="#303030" >15</text></svg>
<div class="b" style="left:0px;top:409.40000000000003px;width:17.30px;height:1.00px;background:#dadada"></div>
<svg class="b" style="left:0;top:0" width="1" height="1"><text transform="translate(1.85,407.00)" font-family="'Liberation Sans'" font-size="10.000" font-weight="normal" font-style="normal" fill="#303030" >16</text></svg>
<div class="b" style="left:0px;top:424.0px;width:17.30px;height:1.00px;background:#dadada"></div>
<svg class="b" style="left:0;top:0" width="1" height="1"><text transform="translate(1.85,421.60)" font-family="'Liberation Sans'" font-size="10.000" font-weight="normal" font-style="normal" fill="#303030" >17</text></svg>
<div class="b" style="left:0px;top:438.6px;width:17.30px;height:1.00px;background:#dadada"></div>
<svg class="b" style="left:0;top:0" width="1" height="1"><text transform="translate(1.85,436.20)" font-family="'Liberation Sans'" font-size="10.000" font-weight="normal" font-style="normal" fill="#303030" >18</text></svg>
<div class="b" style="left:0px;top:453.20000000000005px;width:17.30px;height:1.00px;background:#dadada"></div>
<svg class="b" style="left:0;top:0" width="1" height="1"><text transform="translate(1.85,450.80)" font-family="'Liberation Sans'" font-size="10.000" font-weight="normal" font-style="normal" fill="#303030" >19</text></svg>
<div class="b" style="left:0px;top:467.8px;width:17.30px;height:1.00px;background:#dadada"></div>
<svg class="b" style="left:0;top:0" width="1" height="1"><text transform="translate(1.85,465.40)" font-family="'Liberation Sans'" font-size="10.000" font-weight="normal" font-style="normal" fill="#303030" >20</text></svg>
<div class="b" style="left:16.5px;top:176.3px;width:1.00px;height:284.70px;background:#cdcdcd"></div>
<div class="b" style="left:16.2px;top:190.9px;width:1.70px;height:146.00px;background:#4e9670"></div>
<div class="b" style="left:17.5px;top:177.0px;width:415.50px;height:13.90px;background:#356a55"></div>
<div class="b" style="left:368.6px;top:175.5px;width:64.40px;height:2.00px;background:#2b6048"></div>
<svg class="b" style="left:0;top:0" width="1" height="1"><text transform="translate(20.04,188.10)" font-family="'Liberation Sans'" font-size="10.000" font-weight="bold" font-style="normal" fill="#fff" >Έργο</text></svg>
<div class="b" style="left:92.1px;top:178.3px;width:11.90px;height:12.00px;background:#f3f4f6;border:0.6px solid #e2e2e2"></div>
<svg class="b" style="left:95.9px;top:182.70000000000002px" width="4.8" height="2.6" viewBox="0 0 4.8 2.6"><path d="M0 0h4.8L2.4 2.6z" fill="#444"/></svg>
<svg class="b" style="left:0;top:0" width="1" height="1"><text transform="translate(106.54,188.10)" font-family="'Liberation Sans'" font-size="10.000" font-weight="bold" font-style="normal" fill="#fff" >Έναρξη</text></svg>
<div class="b" style="left:198.2px;top:178.3px;width:11.90px;height:12.00px;background:#f3f4f6;border:0.6px solid #e2e2e2"></div>
<svg class="b" style="left:202.0px;top:182.70000000000002px" width="4.8" height="2.6" viewBox="0 0 4.8 2.6"><path d="M0 0h4.8L2.4 2.6z" fill="#444"/></svg>
<svg class="b" style="left:0;top:0" width="1" height="1"><text transform="translate(212.80,188.10)" font-family="'Liberation Sans'" font-size="10.000" font-weight="bold" font-style="normal" fill="#fff" >Λήξη</text></svg>
<div class="b" style="left:285.40000000000003px;top:178.3px;width:11.90px;height:12.00px;background:#f3f4f6;border:0.6px solid #e2e2e2"></div>
<svg class="b" style="left:289.2px;top:182.70000000000002px" width="4.8" height="2.6" viewBox="0 0 4.8 2.6"><path d="M0 0h4.8L2.4 2.6z" fill="#444"/></svg>
<svg class="b" style="left:0;top:0" width="1" height="1"><text transform="translate(299.69,188.10)" font-family="'Liberation Sans'" font-size="10.000" font-weight="bold" font-style="normal" fill="#fff" >Διάρκεια</text></svg>
<div class="b" style="left:356.30000000000007px;top:178.3px;width:11.90px;height:12.00px;background:#f3f4f6;border:0.6px solid #e2e2e2"></div>
<svg class="b" style="left:360.1px;top:182.70000000000002px" width="4.8" height="2.6" viewBox="0 0 4.8 2.6"><path d="M0 0h4.8L2.4 2.6z" fill="#444"/></svg>
<svg class="b" style="left:0;top:0" width="1" height="1"><text transform="translate(369.69,188.10)" font-family="'Liberation Sans'" font-size="10.000" font-weight="bold" font-style="normal" fill="#fff" >Διαφορά</text></svg>
<div class="b" style="left:420.70000000000005px;top:178.3px;width:11.90px;height:12.00px;background:#f3f4f6;border:0.6px solid #e2e2e2"></div>
<svg class="b" style="left:424.5px;top:182.70000000000002px" width="4.8" height="2.6" viewBox="0 0 4.8 2.6"><path d="M0 0h4.8L2.4 2.6z" fill="#444"/></svg>
<div class="b" style="left:17.5px;top:190.9px;width:415.50px;height:14.60px;background:#ffffff"></div>
<div class="b" style="left:17.5px;top:205.5px;width:415.50px;height:14.60px;background:#f4f5f7"></div>
<div class="b" style="left:17.5px;top:220.10000000000002px;width:415.50px;height:14.60px;background:#ffffff"></div>
<div class="b" style="left:17.5px;top:234.70000000000002px;width:415.50px;height:14.60px;background:#f4f5f7"></div>
<div class="b" style="left:17.5px;top:249.3px;width:415.50px;height:14.60px;background:#ffffff"></div>
<div class="b" style="left:17.5px;top:263.9px;width:415.50px;height:14.60px;background:#f4f5f7"></div>
<div class="b" style="left:17.5px;top:278.5px;width:415.50px;height:14.60px;background:#ffffff"></div>
<div class="b" style="left:17.5px;top:293.1px;width:415.50px;height:14.60px;background:#f4f5f7"></div>
<div class="b" style="left:17.5px;top:307.70000000000005px;width:415.50px;height:14.60px;background:#ffffff"></div>
<div class="b" style="left:17.5px;top:322.3px;width:415.50px;height:14.60px;background:#f4f5f7"></div>
<div class="b" style="left:297.7px;top:190.9px;width:70.90px;height:146.00px;background:#fff"></div>
<div class="b" style="left:297.7px;top:205.0px;width:70.90px;height:1.00px;background:#ededed"></div>
<div class="b" style="left:297.7px;top:219.6px;width:70.90px;height:1.00px;background:#ededed"></div>
<div class="b" style="left:297.7px;top:234.20000000000002px;width:70.90px;height:1.00px;background:#ededed"></div>
<div class="b" style="left:297.7px;top:248.8px;width:70.90px;height:1.00px;background:#ededed"></div>
<div class="b" style="left:297.7px;top:263.40000000000003px;width:70.90px;height:1.00px;background:#ededed"></div>
<div class="b" style="left:297.7px;top:278.0px;width:70.90px;height:1.00px;background:#ededed"></div>
<div class="b" style="left:297.7px;top:292.6px;width:70.90px;height:1.00px;background:#ededed"></div>
<div class="b" style="left:297.7px;top:307.20000000000005px;width:70.90px;height:1.00px;background:#ededed"></div>
<div class="b" style="left:297.7px;top:321.80000000000007px;width:70.90px;height:1.00px;background:#ededed"></div>
<div class="b" style="left:368.6px;top:205.5px;width:64.40px;height:131.40px;background:#c8c8c8"></div>
<div class="b" style="left:368.6px;top:219.6px;width:64.40px;height:1.00px;background:#bfbfbf"></div>
<div class="b" style="left:368.6px;top:234.20000000000002px;width:64.40px;height:1.00px;background:#bfbfbf"></div>
<div class="b" style="left:368.6px;top:248.8px;width:64.40px;height:1.00px;background:#bfbfbf"></div>
<div class="b" style="left:368.6px;top:263.40000000000003px;width:64.40px;height:1.00px;background:#bfbfbf"></div>
<div class="b" style="left:368.6px;top:278.0px;width:64.40px;height:1.00px;background:#bfbfbf"></div>
<div class="b" style="left:368.6px;top:292.6px;width:64.40px;height:1.00px;background:#bfbfbf"></div>
<div class="b" style="left:368.6px;top:307.20000000000005px;width:64.40px;height:1.00px;background:#bfbfbf"></div>
<div class="b" style="left:368.6px;top:321.80000000000007px;width:64.40px;height:1.00px;background:#bfbfbf"></div>
<svg class="b" style="left:0;top:0" width="1" height="1"><text transform="translate(19.50,202.20)" font-family="'Liberation Sans'" font-size="10.000" font-weight="normal" font-style="normal" fill="#1a1a1a" >Web Delta</text></svg>
<svg class="b" style="left:0;top:0" width="1" height="1"><text transform="translate(164.26,202.20)" font-family="'Liberation Sans'" font-size="10.000" font-weight="normal" font-style="normal" fill="#1a1a1a" >13/5/2024</text></svg>
<svg class="b" style="left:0;top:0" width="1" height="1"><text transform="translate(355.88,202.20)" font-family="'Liberation Sans'" font-size="10.000" font-weight="normal" font-style="normal" fill="#1a1a1a" >52</text></svg>
<svg class="b" style="left:0;top:0" width="1" height="1"><text transform="translate(420.28,202.20)" font-family="'Liberation Sans'" font-size="10.000" font-weight="normal" font-style="normal" fill="#1a1a1a" >73</text></svg>
<svg class="b" style="left:0;top:0" width="1" height="1"><text transform="translate(18.72,216.80)" font-family="'Liberation Sans'" font-size="10.000" font-weight="normal" font-style="normal" fill="#1a1a1a" >Network Beta</text></svg>
<svg class="b" style="left:0;top:0" width="1" height="1"><text transform="translate(164.26,216.80)" font-family="'Liberation Sans'" font-size="10.000" font-weight="normal" font-style="normal" fill="#1a1a1a" >21/4/2024</text></svg>
<svg class="b" style="left:0;top:0" width="1" height="1"><text transform="translate(251.46,216.80)" font-family="'Liberation Sans'" font-size="10.000" font-weight="normal" font-style="normal" fill="#1a1a1a" >17/5/2024</text></svg>
<svg class="b" style="left:0;top:0" width="1" height="1"><text transform="translate(355.88,216.80)" font-family="'Liberation Sans'" font-size="10.000" font-weight="normal" font-style="normal" fill="#1a1a1a" >26</text></svg>
<svg class="b" style="left:0;top:0" width="1" height="1"><text transform="translate(420.28,216.80)" font-family="'Liberation Sans'" font-size="10.000" font-weight="normal" font-style="normal" fill="#1a1a1a" >51</text></svg>
<svg class="b" style="left:0;top:0" width="1" height="1"><text transform="translate(18.72,231.40)" font-family="'Liberation Sans'" font-size="10.000" font-weight="normal" font-style="normal" fill="#1a1a1a" >Design Zeta</text></svg>
<svg class="b" style="left:0;top:0" width="1" height="1"><text transform="translate(169.82,231.40)" font-family="'Liberation Sans'" font-size="10.000" font-weight="normal" font-style="normal" fill="#1a1a1a" >1/3/2024</text></svg>
<svg class="b" style="left:0;top:0" width="1" height="1"><text transform="translate(251.46,231.40)" font-family="'Liberation Sans'" font-size="10.000" font-weight="normal" font-style="normal" fill="#1a1a1a" >10/4/2024</text></svg>
<svg class="b" style="left:0;top:0" width="1" height="1"><text transform="translate(355.73,231.40)" font-family="'Liberation Sans'" font-size="10.000" font-weight="normal" font-style="normal" fill="#1a1a1a" >40</text></svg>
<svg class="b" style="left:0;top:0" width="1" height="1"><text transform="translate(425.69,231.40)" font-family="'Liberation Sans'" font-size="10.000" font-weight="normal" font-style="normal" fill="#1a1a1a" >0</text></svg>
<svg class="b" style="left:0;top:0" width="1" height="1"><text transform="translate(18.72,246.00)" font-family="'Liberation Sans'" font-size="10.000" font-weight="normal" font-style="normal" fill="#1a1a1a" >Data Eta</text></svg>
<svg class="b" style="left:0;top:0" width="1" height="1"><text transform="translate(169.82,246.00)" font-family="'Liberation Sans'" font-size="10.000" font-weight="normal" font-style="normal" fill="#1a1a1a" >1/3/2024</text></svg>
<svg class="b" style="left:0;top:0" width="1" height="1"><text transform="translate(251.46,246.00)" font-family="'Liberation Sans'" font-size="10.000" font-weight="normal" font-style="normal" fill="#1a1a1a" >24/3/2024</text></svg>
<svg class="b" style="left:0;top:0" width="1" height="1"><text transform="translate(355.88,246.00)" font-family="'Liberation Sans'" font-size="10.000" font-weight="normal" font-style="normal" fill="#1a1a1a" >23</text></svg>
<svg class="b" style="left:0;top:0" width="1" height="1"><text transform="translate(425.69,246.00)" font-family="'Liberation Sans'" font-size="10.000" font-weight="normal" font-style="normal" fill="#1a1a1a" >0</text></svg>
<svg class="b" style="left:0;top:0" width="1" height="1"><text transform="translate(18.72,260.60)" font-family="'Liberation Sans'" font-size="10.000" font-weight="normal" font-style="normal" fill="#1a1a1a" >Project Kappa</text></svg>
<svg class="b" style="left:0;top:0" width="1" height="1"><text transform="translate(164.26,260.60)" font-family="'Liberation Sans'" font-size="10.000" font-weight="normal" font-style="normal" fill="#1a1a1a" >12/6/2024</text></svg>
<svg class="b" style="left:0;top:0" width="1" height="1"><text transform="translate(251.46,260.60)" font-family="'Liberation Sans'" font-size="10.000" font-weight="normal" font-style="normal" fill="#1a1a1a" >14/7/2024</text></svg>
<svg class="b" style="left:0;top:0" width="1" height="1"><text transform="translate(355.88,260.60)" font-family="'Liberation Sans'" font-size="10.000" font-weight="normal" font-style="normal" fill="#1a1a1a" >32</text></svg>
<svg class="b" style="left:0;top:0" width="1" height="1"><text transform="translate(414.72,260.60)" font-family="'Liberation Sans'" font-size="10.000" font-weight="normal" font-style="normal" fill="#1a1a1a" >103</text></svg>
<svg class="b" style="left:0;top:0" width="1" height="1"><text transform="translate(19.50,275.20)" font-family="'Liberation Sans'" font-size="10.000" font-weight="normal" font-style="normal" fill="#1a1a1a" >Web Alpha</text></svg>
<svg class="b" style="left:0;top:0" width="1" height="1"><text transform="translate(169.82,275.20)" font-family="'Liberation Sans'" font-size="10.000" font-weight="normal" font-style="normal" fill="#1a1a1a" >3/3/2024</text></svg>
<svg class="b" style="left:0;top:0" width="1" height="1"><text transform="translate(251.46,275.20)" font-family="'Liberation Sans'" font-size="10.000" font-weight="normal" font-style="normal" fill="#1a1a1a" >13/4/2024</text></svg>
<svg class="b" style="left:0;top:0" width="1" height="1"><text transform="translate(355.88,275.20)" font-family="'Liberation Sans'" font-size="10.000" font-weight="normal" font-style="normal" fill="#1a1a1a" >41</text></svg>
<svg class="b" style="left:0;top:0" width="1" height="1"><text transform="translate(425.84,275.20)" font-family="'Liberation Sans'" font-size="10.000" font-weight="normal" font-style="normal" fill="#1a1a1a" >2</text></svg>
<svg class="b" style="left:0;top:0" width="1" height="1"><text transform="translate(19.19,289.80)" font-family="'Liberation Sans'" font-size="10.000" font-weight="normal" font-style="normal" fill="#1a1a1a" >Security Gamma</text></svg>
<svg class="b" style="left:0;top:0" width="1" height="1"><text transform="translate(164.26,289.80)" font-family="'Liberation Sans'" font-size="10.000" font-weight="normal" font-style="normal" fill="#1a1a1a" >29/6/2024</text></svg>
<svg class="b" style="left:0;top:0" width="1" height="1"><text transform="translate(257.02,289.80)" font-family="'Liberation Sans'" font-size="10.000" font-weight="normal" font-style="normal" fill="#1a1a1a" >5/8/2024</text></svg>
<svg class="b" style="left:0;top:0" width="1" height="1"><text transform="translate(355.88,289.80)" font-family="'Liberation Sans'" font-size="10.000" font-weight="normal" font-style="normal" fill="#1a1a1a" >37</text></svg>
<svg class="b" style="left:0;top:0" width="1" height="1"><text transform="translate(414.56,289.80)" font-family="'Liberation Sans'" font-size="10.000" font-weight="normal" font-style="normal" fill="#1a1a1a" >120</text></svg>
<svg class="b" style="left:0;top:0" width="1" height="1"><text transform="translate(19.19,304.40)" font-family="'Liberation Sans'" font-size="10.000" font-weight="normal" font-style="normal" fill="#1a1a1a" >Security Alpha</text></svg>
<svg class="b" style="left:0;top:0" width="1" height="1"><text transform="translate(164.26,304.40)" font-family="'Liberation Sans'" font-size="10.000" font-weight="normal" font-style="normal" fill="#1a1a1a" >19/5/2024</text></svg>
<svg class="b" style="left:0;top:0" width="1" height="1"><text transform="translate(251.46,304.40)" font-family="'Liberation Sans'" font-size="10.000" font-weight="normal" font-style="normal" fill="#1a1a1a" >19/6/2024</text></svg>
<svg class="b" style="left:0;top:0" width="1" height="1"><text transform="translate(355.88,304.40)" font-family="'Liberation Sans'" font-size="10.000" font-weight="normal" font-style="normal" fill="#1a1a1a" >31</text></svg>
<svg class="b" style="left:0;top:0" width="1" height="1"><text transform="translate(420.28,304.40)" font-family="'Liberation Sans'" font-size="10.000" font-weight="normal" font-style="normal" fill="#1a1a1a" >79</text></svg>
<svg class="b" style="left:0;top:0" width="1" height="1"><text transform="translate(18.72,319.00)" font-family="'Liberation Sans'" font-size="10.000" font-weight="normal" font-style="normal" fill="#1a1a1a" >Network Delta</text></svg>
<svg class="b" style="left:0;top:0" width="1" height="1"><text transform="translate(164.26,319.00)" font-family="'Liberation Sans'" font-size="10.000" font-weight="normal" font-style="normal" fill="#1a1a1a" >29/3/2024</text></svg>
<svg class="b" style="left:0;top:0" width="1" height="1"><text transform="translate(257.02,319.00)" font-family="'Liberation Sans'" font-size="10.000" font-weight="normal" font-style="normal" fill="#1a1a1a" >1/5/2024</text></svg>
<svg class="b" style="left:0;top:0" width="1" height="1"><text transform="translate(355.88,319.00)" font-family="'Liberation Sans'" font-size="10.000" font-weight="normal" font-style="normal" fill="#1a1a1a" >33</text></svg>
<svg class="b" style="left:0;top:0" width="1" height="1"><text transform="translate(420.28,319.00)" font-family="'Liberation Sans'" font-size="10.000" font-weight="normal" font-style="normal" fill="#1a1a1a" >28</text></svg>
<svg class="b" style="left:0;top:0" width="1" height="1"><text transform="translate(19.03,333.60)" font-family="'Liberation Sans'" font-size="10.000" font-weight="normal" font-style="normal" fill="#1a1a1a" >Cloud Theta</text></svg>
<svg class="b" style="left:0;top:0" width="1" height="1"><text transform="translate(164.26,333.60)" font-family="'Liberation Sans'" font-size="10.000" font-weight="normal" font-style="normal" fill="#1a1a1a" >19/4/2024</text></svg>
<svg class="b" style="left:0;top:0" width="1" height="1"><text transform="translate(257.02,333.60)" font-family="'Liberation Sans'" font-size="10.000" font-weight="normal" font-style="normal" fill="#1a1a1a" >5/5/2024</text></svg>
<svg class="b" style="left:0;top:0" width="1" height="1"><text transform="translate(355.88,333.60)" font-family="'Liberation Sans'" font-size="10.000" font-weight="normal" font-style="normal" fill="#1a1a1a" >16</text></svg>
<svg class="b" style="left:0;top:0" width="1" height="1"><text transform="translate(420.28,333.60)" font-family="'Liberation Sans'" font-size="10.000" font-weight="normal" font-style="normal" fill="#1a1a1a" >49</text></svg>
<div class="b" style="left:17.5px;top:336.0px;width:415.50px;height:1.60px;background:#8c8c8c"></div>
<div class="b" style="left:368.0px;top:190.3px;width:65.90px;height:147.30px;border:1.6px solid #217346"></div>
<div class="b" style="left:431.4px;top:335.29999999999995px;width:3.00px;height:3.00px;background:#217346;box-shadow:0 0 0 0.6px #fff"></div>
<div class="b" style="left:722.5px;top:162.2px;width:13.50px;height:298.80px;background:#f0f0f0"></div>
<div class="b" style="left:724.6px;top:162.7px;width:15.40px;height:298.50px;background:#f7f7f7;border-radius:6.3px"></div>
<svg class="b" style="left:726.6px;top:165.9px" width="8" height="5" viewBox="0 0 8 5"><path d="M0 5L4 0l4 5z" fill="#555"/></svg>
<div class="b" style="left:727.1px;top:175.1px;width:6.70px;height:253.70px;background:#6b6b6b;border-radius:3.3px"></div>
<svg class="b" style="left:727px;top:453.6px" width="7.2" height="5.2" viewBox="0 0 7.2 5.2"><path d="M0 0h7.2L3.6 5.2z" fill="#555"/></svg>
<div class="b" style="left:74px;top:461px;width:62.00px;height:6.00px;background:#fff"></div>
<div class="b" style="left:0px;top:461px;width:80.30px;height:24.00px;background:#f0f0f0;border-top-right-radius:4px"></div>
<div class="b" style="left:129.6px;top:461px;width:606.40px;height:24.00px;background:#f0f0f0;border-top-left-radius:4px"></div>
<svg class="b" style="left:14.7px;top:468.8px" width="5.5" height="8" viewBox="0 0 5.5 8"><path d="M5 0.4L0.8 4 5 7.6" fill="none" stroke="#8a8a8a" stroke-width="0.9"/></svg>
<svg class="b" style="left:39.3px;top:468.8px" width="5.5" height="8" viewBox="0 0 5.5 8"><path d="M0.5 0.4L4.7 4 0.5 7.6" fill="none" stroke="#8a8a8a" stroke-width="0.9"/></svg>
<div class="b" style="left:80.3px;top:461px;width:49.30px;height:21.30px;background:#fff;border-radius:0 0 3.5px 3.5px;box-shadow:0 0.5px 0.8px rgba(0,0,0,0.12)"></div>
<svg class="b" style="left:0;top:0" width="1" height="1"><text transform="translate(87.35,474.90) scale(0.9400,1)" font-family="'Liberation Sans'" font-size="10.435" font-weight="bold" font-style="normal" fill="#1f1f1f" >Φύλλο1</text></svg>
<div class="b" style="left:87px;top:478.8px;width:36.10px;height:1.70px;background:#107c41;border-radius:1px"></div>
<div class="b" style="left:132.2px;top:466.3px;width:1.00px;height:13.50px;background:#d9d9d9"></div>
<svg class="b" style="left:164.2px;top:467.9px" width="8.5" height="8.5" viewBox="0 0 8.5 8.5"><path d="M4.25 0v8.5M0 4.25h8.5" stroke="#444" stroke-width="0.95"/></svg>
<svg class="b" style="left:443.7px;top:469.8px" width="2" height="8" viewBox="0 0 2 8"><circle cx="1" cy="1" r="0.9" fill="#333"/><circle cx="1" cy="4" r="0.9" fill="#333"/><circle cx="1" cy="7" r="0.9" fill="#333"/></svg>
<svg class="b" style="left:460px;top:469.6px" width="5.4" height="6.2" viewBox="0 0 5.4 6.2"><path d="M5.4 0v6.2L0 3.1z" fill="#555"/></svg>
<div class="b" style="left:456.5px;top:466.5px;width:267.00px;height:12.70px;background:#f8f8f8;border-radius:6.3px"></div>
<div class="b" style="left:470.5px;top:469.2px;width:238.80px;height:6.60px;background:#6b6b6b;border-radius:3.3px"></div>
<svg class="b" style="left:715.2px;top:469.6px" width="5.2" height="6.2" viewBox="0 0 5.2 6.2"><path d="M0 0v6.2l5.2-3.1z" fill="#555"/></svg>
<div class="b" style="left:0px;top:485px;width:736.00px;height:15.00px;background:#f3f3f3"></div>
<div class="b" style="left:0px;top:484.8px;width:736.00px;height:0.80px;background:#d9d9d9"></div>
<svg class="b" style="left:0;top:0" width="1" height="1"><text transform="translate(5.83,497.40) scale(0.9721,1)" font-family="'Liberation Sans'" font-size="8.261" font-weight="normal" font-style="normal" fill="#454545" >Έτοιμο</text></svg>
<svg class="b" style="left:0;top:0" width="1" height="1"><text transform="translate(61.63,497.40) scale(0.9473,1)" font-family="'Liberation Sans'" font-size="8.261" font-weight="normal" font-style="normal" fill="#454545" >Φύλλο 1 από 1</text></svg>
<svg class="b" style="left:128px;top:489px" width="12" height="11" viewBox="0 0 12 11"><rect x="0.7" y="0.7" width="10" height="8.6" rx="1" fill="none" stroke="#5a5a5a" stroke-width="1.1"/><rect x="0.7" y="0.7" width="10" height="2" fill="#5a5a5a"/><path d="M2.6 3.6v4.4h2" fill="none" stroke="#777" stroke-width="0.8"/><circle cx="7.5" cy="6.8" r="3.3" fill="#fff" stroke="#555" stroke-width="1.1"/><circle cx="7.5" cy="6.8" r="1.3" fill="#111"/></svg>
<svg class="b" style="left:0;top:0" width="1" height="1"><text transform="translate(267.09,497.40) scale(0.9493,1)" font-family="'Liberation Sans'" font-size="8.261" font-weight="normal" font-style="normal" fill="#454545" >Μέσος όρος: 51</text></svg>
<svg class="b" style="left:0;top:0" width="1" height="1"><text transform="translate(361.38,497.40) scale(0.9611,1)" font-family="'Liberation Sans'" font-size="8.261" font-weight="normal" font-style="normal" fill="#454545" >Πλήθος: 10</text></svg>
<svg class="b" style="left:0;top:0" width="1" height="1"><text transform="translate(412.40,497.40) scale(0.9572,1)" font-family="'Liberation Sans'" font-size="8.261" font-weight="normal" font-style="normal" fill="#454545" >Άθροισμα: 505</text></svg>
<div class="b" style="left:506.4px;top:486.2px;width:28.90px;height:13.80px;background:#dcdcdc"></div>
<svg class="b" style="left:515.2px;top:488.8px" width="10.8" height="9.6" viewBox="0 0 10.8 9.6"><rect x="0.5" y="0.5" width="9.8" height="8.6" rx="0.8" fill="none" stroke="#444" stroke-width="1"/><g stroke="#555" stroke-width="0.7"><line x1="2.95" y1="0.5" x2="2.95" y2="9.1"/><line x1="5.4" y1="0.5" x2="5.4" y2="9.1"/><line x1="7.85" y1="0.5" x2="7.85" y2="9.1"/><line x1="0.5" y1="2.65" x2="10.3" y2="2.65"/><line x1="0.5" y1="4.8" x2="10.3" y2="4.8"/><line x1="0.5" y1="6.95" x2="10.3" y2="6.95"/></g></svg>
<svg class="b" style="left:545.5px;top:488.8px" width="11.4" height="9.6" viewBox="0 0 11.4 9.6"><rect x="0.5" y="0.5" width="10.4" height="8.6" rx="1.2" fill="none" stroke="#444" stroke-width="1"/><path d="M3.4 2v5.6M8 2v5.6" stroke="#555" stroke-width="0.9"/></svg>
<svg class="b" style="left:575.8px;top:488.8px" width="11.2" height="9.6" viewBox="0 0 11.2 9.6"><rect x="0.5" y="0.5" width="10.2" height="8.6" rx="0.8" fill="none" stroke="#444" stroke-width="1"/><path d="M0.5 5.6H10.7M3.6 0.5v5.1M7.5 0.5v5.1" fill="none" stroke="#444" stroke-width="0.9"/></svg>
<div class="b" style="left:600.4px;top:493px;width:5.70px;height:1.00px;background:#666"></div>
<div class="b" style="left:610.3px;top:492.9px;width:74.40px;height:1.40px;background:#7c7c7c"></div>
<div class="b" style="left:645.8px;top:489.4px;width:3.80px;height:8.40px;background:#555;border-radius:0.6px"></div>
<svg class="b" style="left:688.5px;top:490.6px" width="5.5" height="5.5" viewBox="0 0 5.5 5.5"><path d="M2.75 0v5.5M0 2.75h5.5" stroke="#555" stroke-width="0.8"/></svg>
<svg class="b" style="left:0;top:0" width="1" height="1"><text transform="translate(704.01,497.40) scale(0.9428,1)" font-family="'Liberation Sans'" font-size="8.261" font-weight="normal" font-style="normal" fill="#454545" >100%</text></svg>
<div class="b" style="left:183.6px;top:131.4px;width:127.40px;height:71.80px;background:#fff;border:1px solid #8c8c8c;border-radius:0 5px 5px 5px;box-shadow:1px 2px 4px rgba(0,0,0,0.22)"></div>
<div class="b" style="left:183.6px;top:129.5px;width:47.40px;height:2.40px;background:#e8e8e8;border-left:1px solid #a9a9a9;border-right:1px solid #a9a9a9"></div>
<div class="b" style="left:184px;top:131.2px;width:127.00px;height:1.00px;background:#8f8f8f;border-radius:0 4px 0 0"></div>
<div class="b" style="left:189.2px;top:138.9px;width:116.20px;height:17.90px;background:#fff;border:1.4px solid #333;border-radius:3.5px"></div>
<div class="b" style="left:288.2px;top:140.4px;width:15.80px;height:14.90px;background:#efefef"></div>
<svg class="b" style="left:293.6px;top:147px" width="5" height="3" viewBox="0 0 5 3"><path d="M0.5 0.5l2 2 2-2" fill="none" stroke="#333" stroke-width="1"/></svg>
<div class="b" style="left:190.9px;top:145px;width:0.70px;height:8.20px;background:#4a4a60"></div>
<svg class="b" style="left:0;top:0" width="1" height="1"><text transform="translate(191.90,151.90) scale(0.8564,1)" font-family="'Liberation Sans'" font-size="8.986" font-weight="normal" font-style="normal" fill="#505050" >Αριθμός</text></svg>
<svg class="b" style="left:192px;top:168px" width="13.5" height="11" viewBox="0 0 13.5 11"><rect x="0.5" y="0.5" width="12" height="7" rx="0.6" fill="#e8e8e8" stroke="#585858" stroke-width="1"/><path d="M4.4 2.2a1.6 1.6 0 1 0 0 3.1M6.6 2.2a1.6 1.6 0 1 0 0 3.1" fill="none" stroke="#585858" stroke-width="0.8"/><rect x="6.2" y="3.2" width="6.8" height="7.4" rx="2.2" fill="#ee8d2e"/><g stroke="#fff" stroke-width="0.75"><line x1="7" y1="5.6" x2="12.2" y2="5.6"/><line x1="7" y1="8" x2="12.2" y2="8"/></g></svg>
<svg class="b" style="left:213.8px;top:171px" width="4.8" height="3" viewBox="0 0 4.8 3"><path d="M0.4 0.4l2 2 2-2" fill="none" stroke="#444" stroke-width="1"/></svg>
<svg class="b" style="left:229.8px;top:166.9px" width="12" height="11" viewBox="0 0 12 11"><ellipse cx="3.1" cy="3.1" rx="2.4" ry="2.5" fill="none" stroke="#444" stroke-width="0.95"/><ellipse cx="9" cy="8" rx="2.4" ry="2.6" fill="none" stroke="#444" stroke-width="0.95"/><line x1="9.6" y1="0.3" x2="2.4" y2="10.7" stroke="#444" stroke-width="0.95"/></svg>
<svg class="b" style="left:0;top:0" width="1" height="1"><text transform="translate(248.67,175.20) scale(0.9431,1)" font-family="'Liberation Sans'" font-size="7.826" font-weight="normal" font-style="normal" fill="#7a7a7a" >000</text></svg>
<div class="b" style="left:266px;top:164px;width:1.00px;height:16.30px;background:#e2e2e2"></div>
<svg class="b" style="left:270px;top:165px" width="13" height="13.5" viewBox="0 0 13 13.5"><g fill="none" stroke="#6a6a6a" stroke-width="0.95"><ellipse cx="10.45" cy="3.4" rx="1.5" ry="2.15"/><ellipse cx="6.5" cy="9.9" rx="1.5" ry="2.2"/><ellipse cx="10.45" cy="9.9" rx="1.5" ry="2.2"/></g><circle cx="3.6" cy="12.1" r="0.6" fill="#6a6a6a"/><path d="M8 4.4H1.2M3.3 2.3L1.1 4.4 3.3 6.5" fill="none" stroke="#2f8fe0" stroke-width="1.15"/></svg>
<svg class="b" style="left:289px;top:165px" width="13" height="13.5" viewBox="0 0 13 13.5"><g fill="none" stroke="#6a6a6a" stroke-width="0.95"><ellipse cx="7.6" cy="3.4" rx="1.5" ry="2.15"/><ellipse cx="11.5" cy="3.4" rx="1.5" ry="2.15"/><ellipse cx="11.5" cy="9.9" rx="1.5" ry="2.2"/></g><circle cx="4.6" cy="5.3" r="0.6" fill="#6a6a6a"/><circle cx="8.4" cy="12.1" r="0.6" fill="#6a6a6a"/><path d="M1.1 9.6H8.3M6.1 7.5L8.3 9.6 6.1 11.7" fill="none" stroke="#2f8fe0" stroke-width="1.15"/></svg>
<svg class="b" style="left:0;top:0" width="1" height="1"><text transform="translate(227.20,200.70) scale(0.9065,1)" font-family="'Liberation Sans'" font-size="8.551" font-weight="normal" font-style="normal" fill="#3a3a3a" >Αριθμός</text></svg>
<svg class="b" style="left:302.2px;top:195.6px" width="6.8" height="5.3" viewBox="0 0 6.8 5.3"><rect x="0.4" y="0.4" width="6" height="4.5" fill="none" stroke="#555" stroke-width="0.7"/><path d="M2.5 1.8l2.6 2.2M5.3 2.6v1.5h-1.6" fill="none" stroke="#555" stroke-width="0.7"/></svg>
<svg class="b" style="left:210px;top:156px" width="22" height="36" viewBox="0 0 22 36"><line x1="5.2" y1="33.4" x2="11.6" y2="16" stroke="#ff0d0d" stroke-width="2.3" stroke-linecap="round"/><path d="M16.6 4.4L16 16.8 8.8 14.6z" fill="#ff0d0d" stroke="#ff0d0d" stroke-width="0.6" stroke-linejoin="round"/></svg>
</body></html>
